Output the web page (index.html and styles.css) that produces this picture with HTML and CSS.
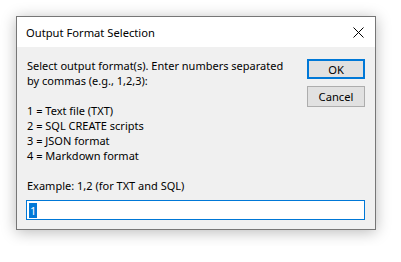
FILE: index.html
```html
<!DOCTYPE html>
<html>
<head>
<meta charset="utf-8">
<link rel="stylesheet" href="styles.css">
</head>
<body>
<div class="window">
  <div class="titlebar">
    <span class="title">Output Format Selection</span>
    <svg class="close" width="11" height="11" viewBox="0 0 11 11"><path d="M0.5 0.5 L10.5 10.5 M10.5 0.5 L0.5 10.5" stroke="#000" stroke-width="1" fill="none"/></svg>
  </div>
  <div class="content">
    <div class="top">
      <div class="prompt">
        <div>Select output format(s). Enter numbers separated</div>
        <div>by commas (e.g., 1,2,3):</div>
        <div class="blank"></div>
        <div>1 = Text file (TXT)</div>
        <div>2 = SQL CREATE scripts</div>
        <div>3 = JSON format</div>
        <div>4 = Markdown format</div>
        <div class="blank"></div>
        <div>Example: 1,2 (for TXT and SQL)</div>
      </div>
      <div class="buttons">
        <button class="btn btn-default">OK</button>
        <button class="btn">Cancel</button>
      </div>
    </div>
    <div class="input"><span class="sel">1</span></div>
  </div>
</div>
</body>
</html>
```
FILE: styles.css
```css
html, body {
  margin: 0;
  padding: 0;
  background: #ffffff;
}
body {
  padding: 16px;
  font-family: "Noto Sans", "DejaVu Sans", sans-serif;
  font-size: 11px;
  color: #000;
}
.window {
  width: 358px;
  height: 212px;
  border: 1px solid #767676;
  background: #f0f0f0;
  box-shadow: 0 2px 14px rgba(0, 0, 0, 0.28);
  display: flex;
  flex-direction: column;
}
.titlebar {
  height: 30px;
  background: #ffffff;
  display: flex;
  align-items: center;
  justify-content: space-between;
  padding: 0 11px 0 9px;
}
.title {
  font-size: 11.2px;
  padding-top: 1px;
}
.close {
  display: block;
}
.content {
  padding: 11px 10px 0 10px;
  display: flex;
  flex-direction: column;
}
.top {
  display: flex;
  justify-content: space-between;
}
.prompt {
  line-height: 15px;
}
.blank {
  height: 15px;
}
.buttons {
  display: flex;
  flex-direction: column;
  gap: 7px;
  padding-top: 1px;
}
.btn {
  width: 58px;
  height: 21px;
  background: #e1e1e1;
  border: 1px solid #adadad;
  font-family: inherit;
  font-size: 11.2px;
  color: #000;
  padding: 0;
  margin: 0;
}
.btn-default {
  border: 2px solid #0078d7;
  height: 20px;
}
.input {
  margin-top: 7px;
  margin-left: -1px;
  height: 18px;
  border: 1px solid #0078d7;
  background: #fff;
  display: flex;
  align-items: center;
  padding-left: 2px;
}
.sel {
  background: #0078d7;
  color: #fff;
  line-height: 15px;
  padding: 0 1px;
}
```
